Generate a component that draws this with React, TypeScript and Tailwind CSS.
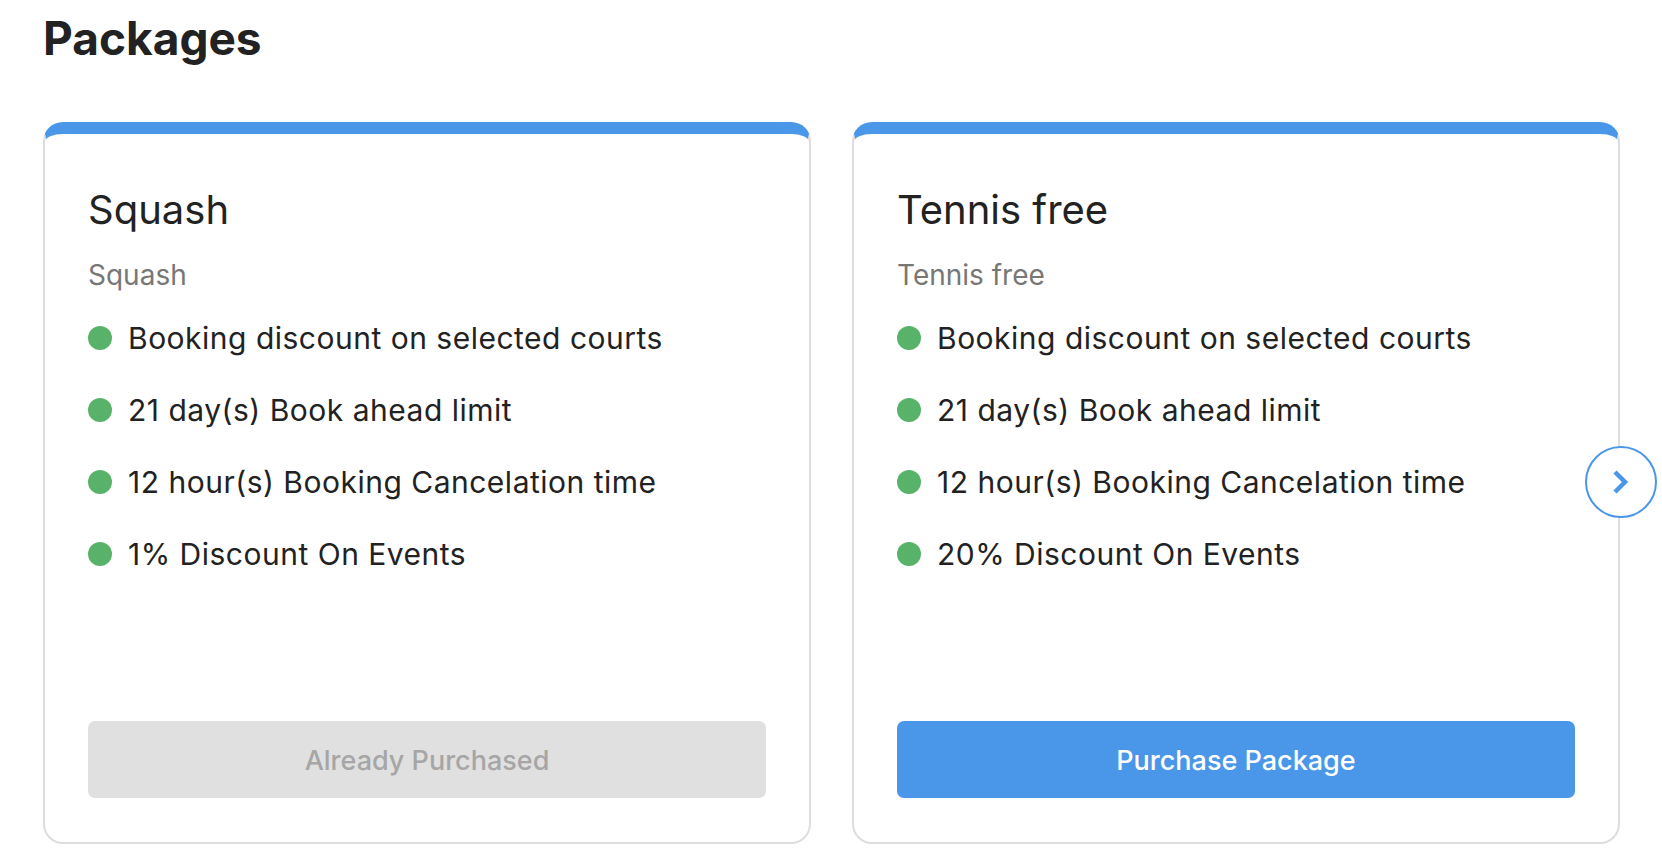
import React from "react";

type Pkg = {
  title: string;
  subtitle: string;
  items: string[];
  purchased: boolean;
};

const packages: Pkg[] = [
  {
    title: "Squash",
    subtitle: "Squash",
    items: [
      "Booking discount on selected courts",
      "21 day(s) Book ahead limit",
      "12 hour(s) Booking Cancelation time",
      "1% Discount On Events",
    ],
    purchased: true,
  },
  {
    title: "Tennis free",
    subtitle: "Tennis free",
    items: [
      "Booking discount on selected courts",
      "21 day(s) Book ahead limit",
      "12 hour(s) Booking Cancelation time",
      "20% Discount On Events",
    ],
    purchased: false,
  },
];

function Card({ pkg, showNext }: { pkg: Pkg; showNext?: boolean }) {
  return (
    <div className="relative flex flex-col w-[768px] h-[722px] shrink-0 rounded-[20px] border-2 border-t-[12px] border-[#dddddd] border-t-[#4a96e8] bg-white px-[43px] pt-[52px] pb-[44px]">
      <div className="text-[40px] leading-[48px] text-[#222222] font-normal">{pkg.title}</div>
      <div className="mt-[24px] text-[28px] leading-[34px] text-[#777777]">{pkg.subtitle}</div>
      <div className="mt-[28px] flex flex-col gap-[36px]">
        {pkg.items.map((it) => (
          <div key={it} className="flex items-center gap-[16px] h-[36px]">
            <span className="w-[24px] h-[24px] rounded-full bg-[#58b26a] shrink-0" />
            <span className="text-[30px] leading-[36px] tracking-[0.5px] text-[#222222]">{it}</span>
          </div>
        ))}
      </div>
      <div className="mt-auto">
        {pkg.purchased ? (
          <div className="h-[77px] pt-[3px] rounded-[7px] bg-[#e0e0e0] flex items-center justify-center text-[27px] font-medium text-[#a6a6a6]">
            Already Purchased
          </div>
        ) : (
          <div className="h-[77px] pt-[3px] rounded-[7px] bg-[#4a96e8] flex items-center justify-center text-[27px] font-medium text-white">
            Purchase Package
          </div>
        )}
      </div>
      {showNext && (
        <div className="absolute right-[-39px] top-[312px] w-[72px] h-[72px] rounded-full border-2 border-[#4a96e8] bg-white flex items-center justify-center">
          <svg width="20" height="26" viewBox="0 0 20 26" fill="none">
            <polyline
              points="4,3 14,13 4,23"
              stroke="#4a96e8"
              strokeWidth="4.5"
              strokeLinejoin="miter"
              strokeLinecap="butt"
            />
          </svg>
        </div>
      )}
    </div>
  );
}

export default function App() {
  return (
    <div
      className="w-[1662px] h-[860px] bg-white overflow-hidden pl-[43px]"
      style={{ fontFamily: "Inter, 'Noto Sans', 'Liberation Sans', sans-serif" }}
    >
      <h1 className="pt-[9px] text-[46px] leading-[58px] font-bold text-[#222222]">Packages</h1>
      <div className="mt-[55px] flex gap-[41px]">
        <Card pkg={packages[0]} />
        <Card pkg={packages[1]} showNext />
      </div>
    </div>
  );
}
